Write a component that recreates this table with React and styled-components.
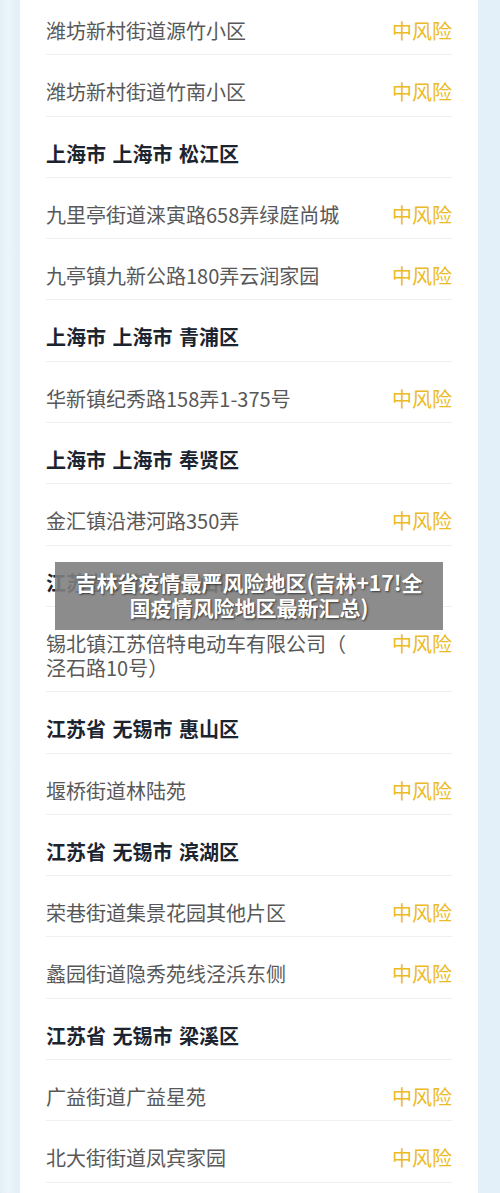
import React from "react";
import styled, { createGlobalStyle } from "styled-components";

const Global = createGlobalStyle`
  html, body { margin: 0; padding: 0; }
  body {
    background: #e5f0f9;
    font-family: "Noto Sans CJK SC", "Noto Sans", sans-serif;
    overflow: hidden;
  }
`;

const Page = styled.div`
  position: relative;
  width: 500px;
  height: 1193px;
  overflow: hidden;
  background: linear-gradient(90deg, #e2eef8 0px, #edf5fb 8px, #e4f0f9 16px, #e4f0f9 100%);
`;

const Card = styled.div`
  margin: -6px 22px 0 20px;
  padding: 0 26px;
  background: #ffffff;
  display: flex;
  flex-direction: column;
`;

const Row = styled.div`
  display: flex;
  justify-content: space-between;
  align-items: flex-start;
  padding: 25px 0 11.3px;
  border-bottom: 1px solid #efefef;
`;

const Place = styled.div`
  font-size: 20px;
  line-height: 24px;
  color: ${(p) => (p.$header ? "#1c2430" : "#585858")};
  font-weight: ${(p) => (p.$header ? 700 : 400)};
  white-space: pre-line;
  word-spacing: ${(p) => (p.$header ? "2px" : "0")};
`;

const Risk = styled.div`
  font-size: 20px;
  line-height: 24px;
  color: #ecba25;
  flex-shrink: 0;
`;

const Overlay = styled.div`
  position: absolute;
  left: 55px;
  top: 562px;
  width: 388px;
  height: 68px;
  box-sizing: border-box;
  padding-top: 8px;
  background: rgba(128, 128, 128, 0.9);
  color: #ffffff;
  font-size: 21px;
  font-weight: 700;
  line-height: 25px;
  text-align: center;
  white-space: nowrap;
  text-shadow: 1px 1px 2px rgba(0, 0, 0, 0.6);
`;

const rows = [
  { t: "潍坊新村街道源竹小区" },
  { t: "潍坊新村街道竹南小区" },
  { t: "上海市 上海市 松江区", h: true },
  { t: "九里亭街道涞寅路658弄绿庭尚城" },
  { t: "九亭镇九新公路180弄云润家园" },
  { t: "上海市 上海市 青浦区", h: true },
  { t: "华新镇纪秀路158弄1-375号" },
  { t: "上海市 上海市 奉贤区", h: true },
  { t: "金汇镇沿港河路350弄" },
  { t: "江苏省 无锡市 锡山区", h: true },
  { t: "锡北镇江苏倍特电动车有限公司（\n泾石路10号）" },
  { t: "江苏省 无锡市 惠山区", h: true },
  { t: "堰桥街道林陆苑" },
  { t: "江苏省 无锡市 滨湖区", h: true },
  { t: "荣巷街道集景花园其他片区" },
  { t: "蠡园街道隐秀苑线泾浜东侧" },
  { t: "江苏省 无锡市 梁溪区", h: true },
  { t: "广益街道广益星苑" },
  { t: "北大街街道凤宾家园" },
  { t: "" },
];

export default function App() {
  return (
    <Page>
      <Global />
      <Card>
        {rows.map((r, i) => (
          <Row key={i}>
            <Place $header={r.h}>{r.t}</Place>
            {!r.h && r.t && <Risk>中风险</Risk>}
          </Row>
        ))}
      </Card>
      <Overlay>
        吉林省疫情最严风险地区(吉林+17!全
        <br />
        国疫情风险地区最新汇总)
      </Overlay>
    </Page>
  );
}
